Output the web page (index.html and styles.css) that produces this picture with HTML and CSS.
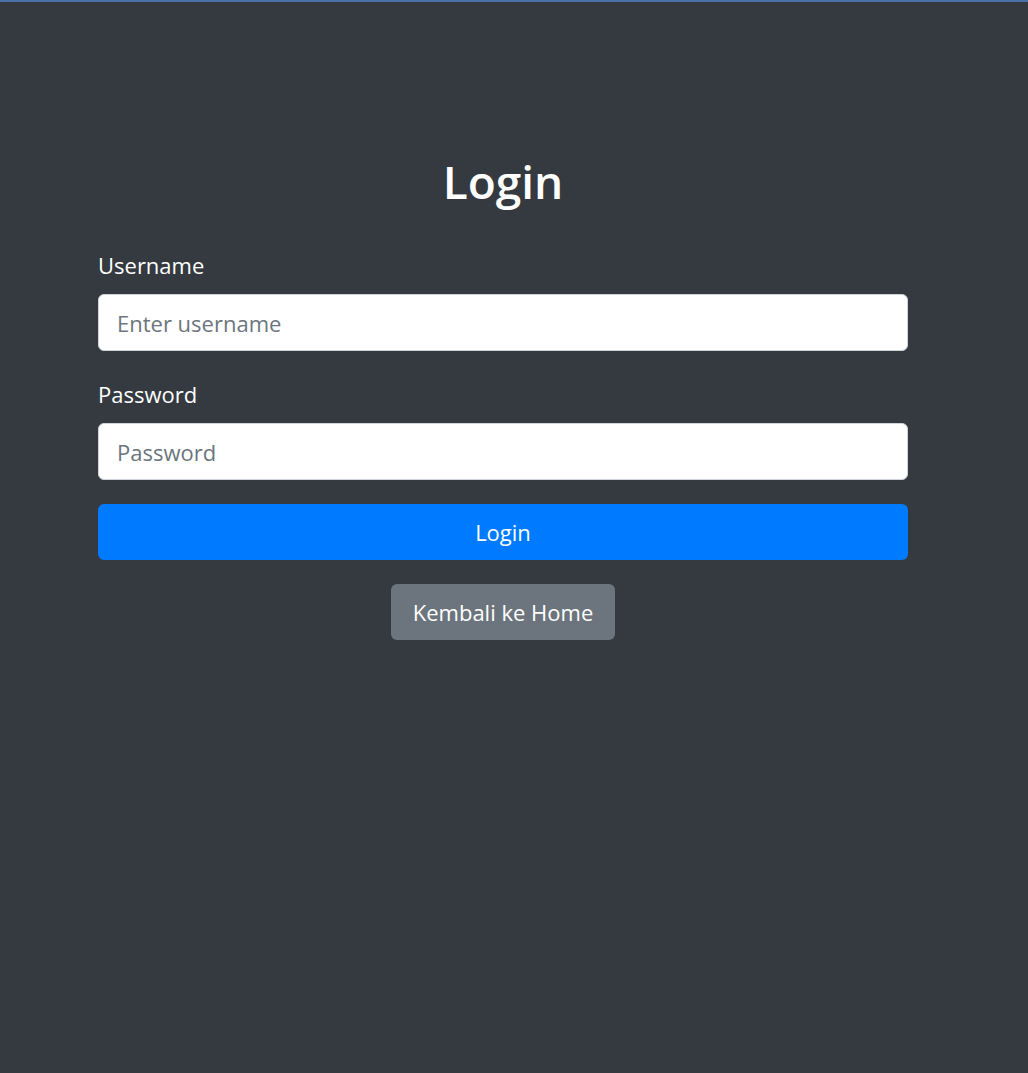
FILE: index.html
```html
<!DOCTYPE html>
<html lang="id">
<head>
    <meta charset="UTF-8">
    <meta name="viewport" content="width=device-width, initial-scale=1.0">
    <title>Login</title>
    <link rel="stylesheet" href="styles.css">
</head>
<body>
    <div class="page">
        <div class="login-box">
            <h1>Login</h1>
            <form action="#" method="post">
                <div class="form-group">
                    <label for="username">Username</label>
                    <input type="text" id="username" name="username" class="form-control" placeholder="Enter username">
                </div>
                <div class="form-group">
                    <label for="password">Password</label>
                    <input type="password" id="password" name="password" class="form-control" placeholder="Password">
                </div>
                <button type="submit" class="btn btn-primary">Login</button>
            </form>
            <div class="back">
                <a href="#" class="btn btn-secondary">Kembali ke Home</a>
            </div>
        </div>
    </div>
</body>
</html>
```

FILE: styles.css
```css
body {
    margin: 0;
    padding: 0;
    background-color: #343a40;
    border-top: 2px solid #4a72a8;
    color: #fff;
    font-family: "Open Sans", "Liberation Sans", sans-serif;
    min-height: 1071px;
}
.page {
    width: 1006px;
}
.login-box {
    width: 810px;
    margin: 0 auto;
    padding-top: 152px;
}
h1 {
    margin: 0 0 41px;
    text-align: center;
    font-size: 46px;
    font-weight: 600;
    line-height: 55px;
}
.form-group {
    margin-bottom: 28px;
}
.form-group:last-of-type {
    margin-bottom: 24px;
}
label {
    display: block;
    font-size: 22px;
    line-height: 30px;
    margin-bottom: 14px;
}
.form-control {
    display: block;
    box-sizing: border-box;
    width: 100%;
    height: 57px;
    padding: 0 18px;
    font-family: inherit;
    font-size: 22px;
    color: #495057;
    background: #fff;
    border: 1px solid #ced4da;
    border-radius: 6px;
}
.form-control::placeholder {
    color: #6c757d;
}
.btn {
    display: inline-block;
    box-sizing: border-box;
    height: 56px;
    line-height: 56px;
    font-family: inherit;
    font-size: 22px;
    color: #fff;
    border: none;
    border-radius: 6px;
    text-decoration: none;
    cursor: pointer;
    padding: 0 22px;
}
.btn-primary {
    display: block;
    width: 100%;
    background-color: #007bff;
}
.btn-secondary {
    background-color: #6c757d;
}
.back {
    margin-top: 24px;
    text-align: center;
}
```
